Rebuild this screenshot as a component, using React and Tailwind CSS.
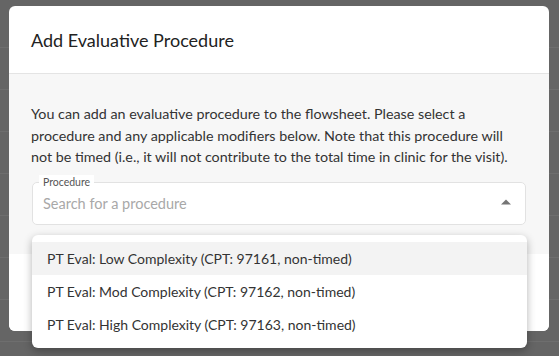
import React from "react";

const font = { fontFamily: "Lato, 'Noto Sans', Arial, sans-serif" };

export default function App() {
  const items = [
    "PT Eval: Low Complexity (CPT: 97161, non-timed)",
    "PT Eval: Mod Complexity (CPT: 97162, non-timed)",
    "PT Eval: High Complexity (CPT: 97163, non-timed)",
  ];
  return (
    <div className="relative w-[559px] h-[356px] overflow-hidden bg-[#656565]" style={font}>
      {/* dimmed background page */}
      <div className="flex flex-col h-full">
        <div className="h-[48px] border-b border-[#6e6e6e]" />
        <div className="h-[42px] border-b border-[#6e6e6e]" />
        <div className="h-[42px] border-b border-[#6e6e6e]" />
        <div className="h-[42px] border-b border-[#6e6e6e]" />
        <div className="h-[42px] border-b border-[#6e6e6e]" />
        <div className="h-[42px] border-b border-[#6e6e6e]" />
        <div className="h-[42px] border-b border-[#6e6e6e]" />
        <div className="h-[42px] border-b border-[#6e6e6e]" />
      </div>

      {/* modal */}
      <div className="absolute left-[9px] top-[6px] w-[540px] h-[325px] bg-white rounded-[6px] overflow-hidden flex flex-col">
        <div className="h-[68px] shrink-0 border-b border-[#e4e4e4] flex items-center pl-[22px] pt-[2px]">
          <h2 className="text-[18px] text-[#222]">Add Evaluative Procedure</h2>
        </div>
        <div className="bg-[#f7f7f7] pt-[29px] pb-[29px] px-[22px] flex flex-col gap-[14px]">
          <p className="text-[14.3px] leading-[21.5px] text-[#333]">
            You can add an evaluative procedure to the flowsheet. Please select a procedure and any applicable modifiers below. Note that this procedure will not be timed (i.e., it will not contribute to the total time in clinic for the visit).
          </p>
          <div className="relative ml-[1px] w-[494px] h-[43px] bg-white border border-[#e2e2e2] rounded-[5px] flex items-center pl-[10px] pr-[14px]">
            <span className="absolute -top-[8px] left-[6px] px-[4px] bg-white text-[10.5px] leading-[14px] text-[#555]">Procedure</span>
            <span className="flex-1 text-[14.5px] text-[#a8a8a8] pt-[1px]">Search for a procedure</span>
            <svg width="10" height="6" viewBox="0 0 10 6" className="mt-[-2px]">
              <path d="M0 5.5 L5 0.5 L10 5.5 Z" fill="#757575" />
            </svg>
          </div>
        </div>
        <div className="flex-1 bg-white" />
      </div>

      {/* dropdown menu */}
      <div className="absolute left-[32px] top-[235px] w-[495px] bg-white rounded-[6px] shadow-[0_3px_8px_rgba(0,0,0,0.3)] py-[7px]">
        {items.map((t, i) => (
          <div
            key={t}
            className={`h-[33px] flex items-center pl-[15px] text-[14px] text-[#333] ${i === 0 ? "bg-[#f3f3f3]" : ""}`}
          >
            {t}
          </div>
        ))}
      </div>
    </div>
  );
}
